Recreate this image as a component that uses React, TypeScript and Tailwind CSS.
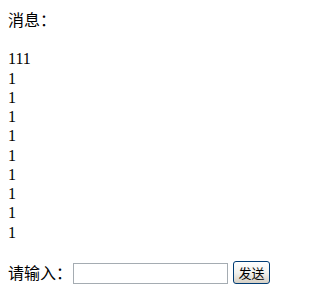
import React from 'react';

const messages = ['111', '1', '1', '1', '1', '1', '1', '1', '1', '1'];

const App: React.FC = () => {
  return (
    <div className="px-2 pt-[11px] text-[16px] leading-[19.25px] text-black bg-white font-['Liberation_Serif','Noto_Sans_CJK_SC',serif]">
      <div>消息：</div>
      <div className="mt-[19px]">
        {messages.map((m, i) => (
          <div key={i}>{m}</div>
        ))}
      </div>
      <div className="mt-[19px] flex items-end">
        <span className="mb-[1px]">请输入：</span>
        <input
          type="text"
          className="ml-px w-[155px] h-[21px] border border-[#a5acb2] bg-white px-1 text-[13px] outline-none"
        />
        <button className="ml-[5px] w-[37px] h-[23px] rounded-[3px] border border-[#003c74] bg-gradient-to-b from-white via-[#f2f2ee] to-[#d6d0c5] text-[13px] leading-none text-black font-['Noto_Sans_CJK_SC',sans-serif]">
          发送
        </button>
      </div>
    </div>
  );
};

export default App;
